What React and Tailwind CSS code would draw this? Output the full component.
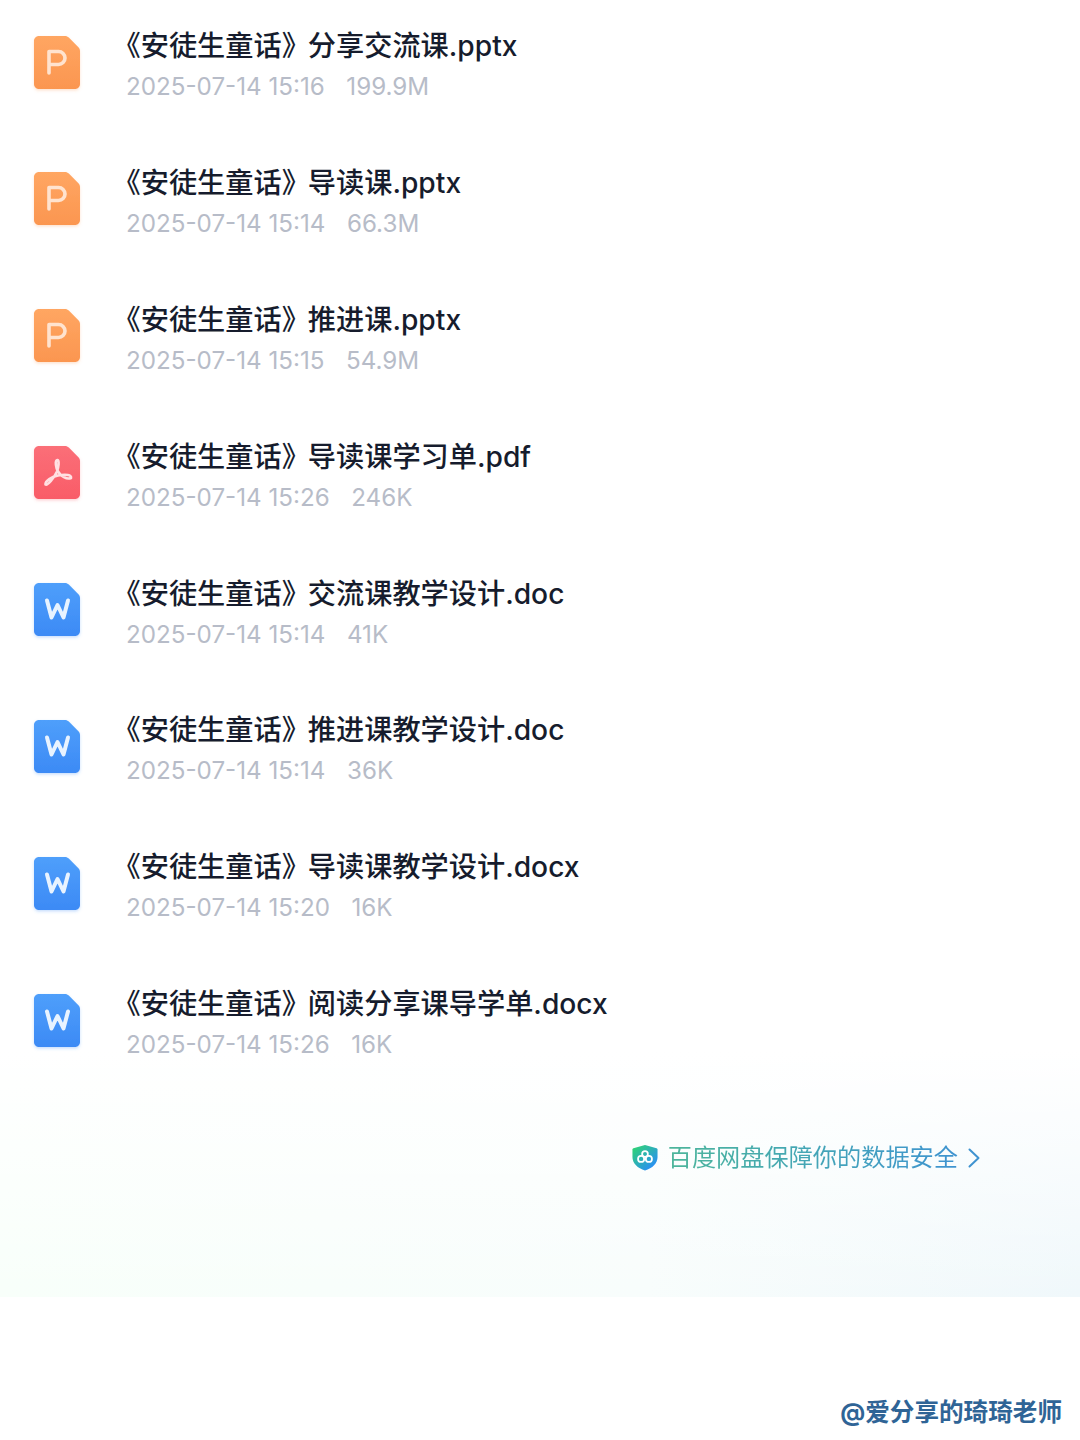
const rows = [
  ["《安徒生童话》分享交流课.pptx", "2025-07-14 15:16", "199.9M", "p"],
  ["《安徒生童话》导读课.pptx", "2025-07-14 15:14", "66.3M", "p"],
  ["《安徒生童话》推进课.pptx", "2025-07-14 15:15", "54.9M", "p"],
  ["《安徒生童话》导读课学习单.pdf", "2025-07-14 15:26", "246K", "a"],
  ["《安徒生童话》交流课教学设计.doc", "2025-07-14 15:14", "41K", "w"],
  ["《安徒生童话》推进课教学设计.doc", "2025-07-14 15:14", "36K", "w"],
  ["《安徒生童话》导读课教学设计.docx", "2025-07-14 15:20", "16K", "w"],
  ["《安徒生童话》阅读分享课导学单.docx", "2025-07-14 15:26", "16K", "w"],
];

const colors = {
  p: ["#ffa662", "#fb9650"],
  a: ["#fb6f78", "#f95c68"],
  w: ["#4f9ffb", "#3c8af5"],
};

function FileIcon({ kind }) {
  const [a, b] = colors[kind];
  const id = "g" + kind;
  return (
    <svg width="54" height="64" viewBox="0 0 54 64" fill="none">
      <defs>
        <linearGradient id={id} x1="0" y1="0" x2="0" y2="1">
          <stop offset="0" stopColor={a} />
          <stop offset="1" stopColor={b} />
        </linearGradient>
        <filter id={id + "s"} x="-20%" y="-20%" width="140%" height="140%">
          <feDropShadow dx="0" dy="1.5" stdDeviation="1.5" floodColor={b} floodOpacity="0.28" />
        </filter>
      </defs>
      <path
        d="M9 6h26c1.400 0 2.800.6 3.800 1.600l9.600 9.700c1 1 1.600 2.400 1.600 3.800V54c0 2.800-2.200 5-5 5H9c-2.800 0-5-2.200-5-5V11c0-2.800 2.200-5 5-5Z"
        fill={`url(#${id})`}
        filter={`url(#${id + "s"})`}
      />
      {kind === "p" && (
        <path d="M19 43V21.500h9.500a6.500 6.500 0 0 1 0 13H19" stroke="#ffe3cf" strokeWidth="3.600" strokeLinecap="round" strokeLinejoin="round" />
      )}
      {kind === "w" && (
        <path d="M17 23.500 21.500 40.500 27.500 28 33.500 40.500 38 23.500" stroke="#e8f3ff" strokeWidth="4" strokeLinecap="round" strokeLinejoin="round" />
      )}
      {kind === "a" && (
        <path d="M27.500 20c-3 .5-1.500 8 .5 11.500 2.500 4.500 9 8.500 13 6.500 1-3-5-4-13-2.500-6 1-13 5.500-12.500 9 2 1.500 8.500-6.500 11.500-13 1.500-4 2.500-11 .5-11.500Z" stroke="#ffe0e2" strokeWidth="2.600" strokeLinejoin="round" />
      )}
    </svg>
  );
}

function Row({ title, date, size, kind }) {
  return (
    <div className="flex h-[136.900px] items-start pl-[30px]">
      <div className="mt-[29.500px] w-[54px] shrink-0">
        <FileIcon kind={kind} />
      </div>
      <div className="ml-[26.500px] flex flex-col">
        <div className="mt-[26px] h-[40px] whitespace-nowrap text-[28.200px] leading-[40px] font-medium text-[#161c2d]">
          <span className="mr-[-2px] ml-[2px]">{title.slice(0, 7)}</span>
          {title.slice(7)}
        </div>
        <div className="mt-[4px] flex h-[34px] gap-[21.500px] pl-[15.500px] text-[24.200px] leading-[34px] text-[#b7bcc8]">
          <span>{date}</span>
          <span>{size}</span>
        </div>
      </div>
    </div>
  );
}

export default function App() {
  return (
    <div
      className="h-[1440px] w-[1080px] overflow-hidden bg-white"
      style={{ fontFamily: '"Inter", "Noto Sans CJK SC", sans-serif' }}
    >
      <div className="h-[1297px] bg-[linear-gradient(to_bottom,#ffffff_81%,rgba(255,255,255,0)_100%),linear-gradient(to_right,#f8fffa,#f8fdfc_60%,#f0f8fb)]">
        <div>
          {rows.map((r) => (
            <Row key={r[0]} title={r[0]} date={r[1]} size={r[2]} kind={r[3]} />
          ))}
        </div>
        <div className="mt-[45.800px] flex items-center justify-end pr-[100px]">
          <svg width="26" height="27" viewBox="0 0 28 29" fill="none">
            <defs>
              <linearGradient id="sh" x1="0.1" y1="0.1" x2="0.8" y2="0.9">
                <stop offset="0" stopColor="#2fd07a" />
                <stop offset="1" stopColor="#2a8ff5" />
              </linearGradient>
            </defs>
            <path d="M14 1 26.500 4.500c.6.200 1 .7 1 1.300V14c0 7-5.500 12-13.500 14.500C6 26 .5 21 .5 14V5.800c0-.6.400-1.100 1-1.300L14 1Z" fill="url(#sh)" />
            <circle cx="9.800" cy="16" r="3.300" stroke="#fff" strokeWidth="1.900" />
            <circle cx="18.200" cy="16" r="3.300" stroke="#fff" strokeWidth="1.900" />
            <circle cx="14" cy="10.800" r="3.100" stroke="#fff" strokeWidth="1.900" />
          </svg>
          <span className="ml-[10px] bg-gradient-to-r from-[#4db59a] to-[#3f93d0] bg-clip-text text-[24.200px] leading-[34px] whitespace-nowrap text-transparent">
            百度网盘保障你的数据安全
          </span>
          <svg className="ml-[10px]" width="12" height="20" viewBox="0 0 12 20" fill="none">
            <path d="M1.500 1.500 10.500 10 1.500 18.500" stroke="#3f93d0" strokeWidth="2" strokeLinecap="round" strokeLinejoin="round" />
          </svg>
        </div>
      </div>
      <div className="flex justify-end pt-[98px] pr-[18px]">
        <span className="text-[24.600px] leading-[34px] font-bold whitespace-nowrap text-[#2f6496]">@爱分享的琦琦老师</span>
      </div>
    </div>
  );
}
